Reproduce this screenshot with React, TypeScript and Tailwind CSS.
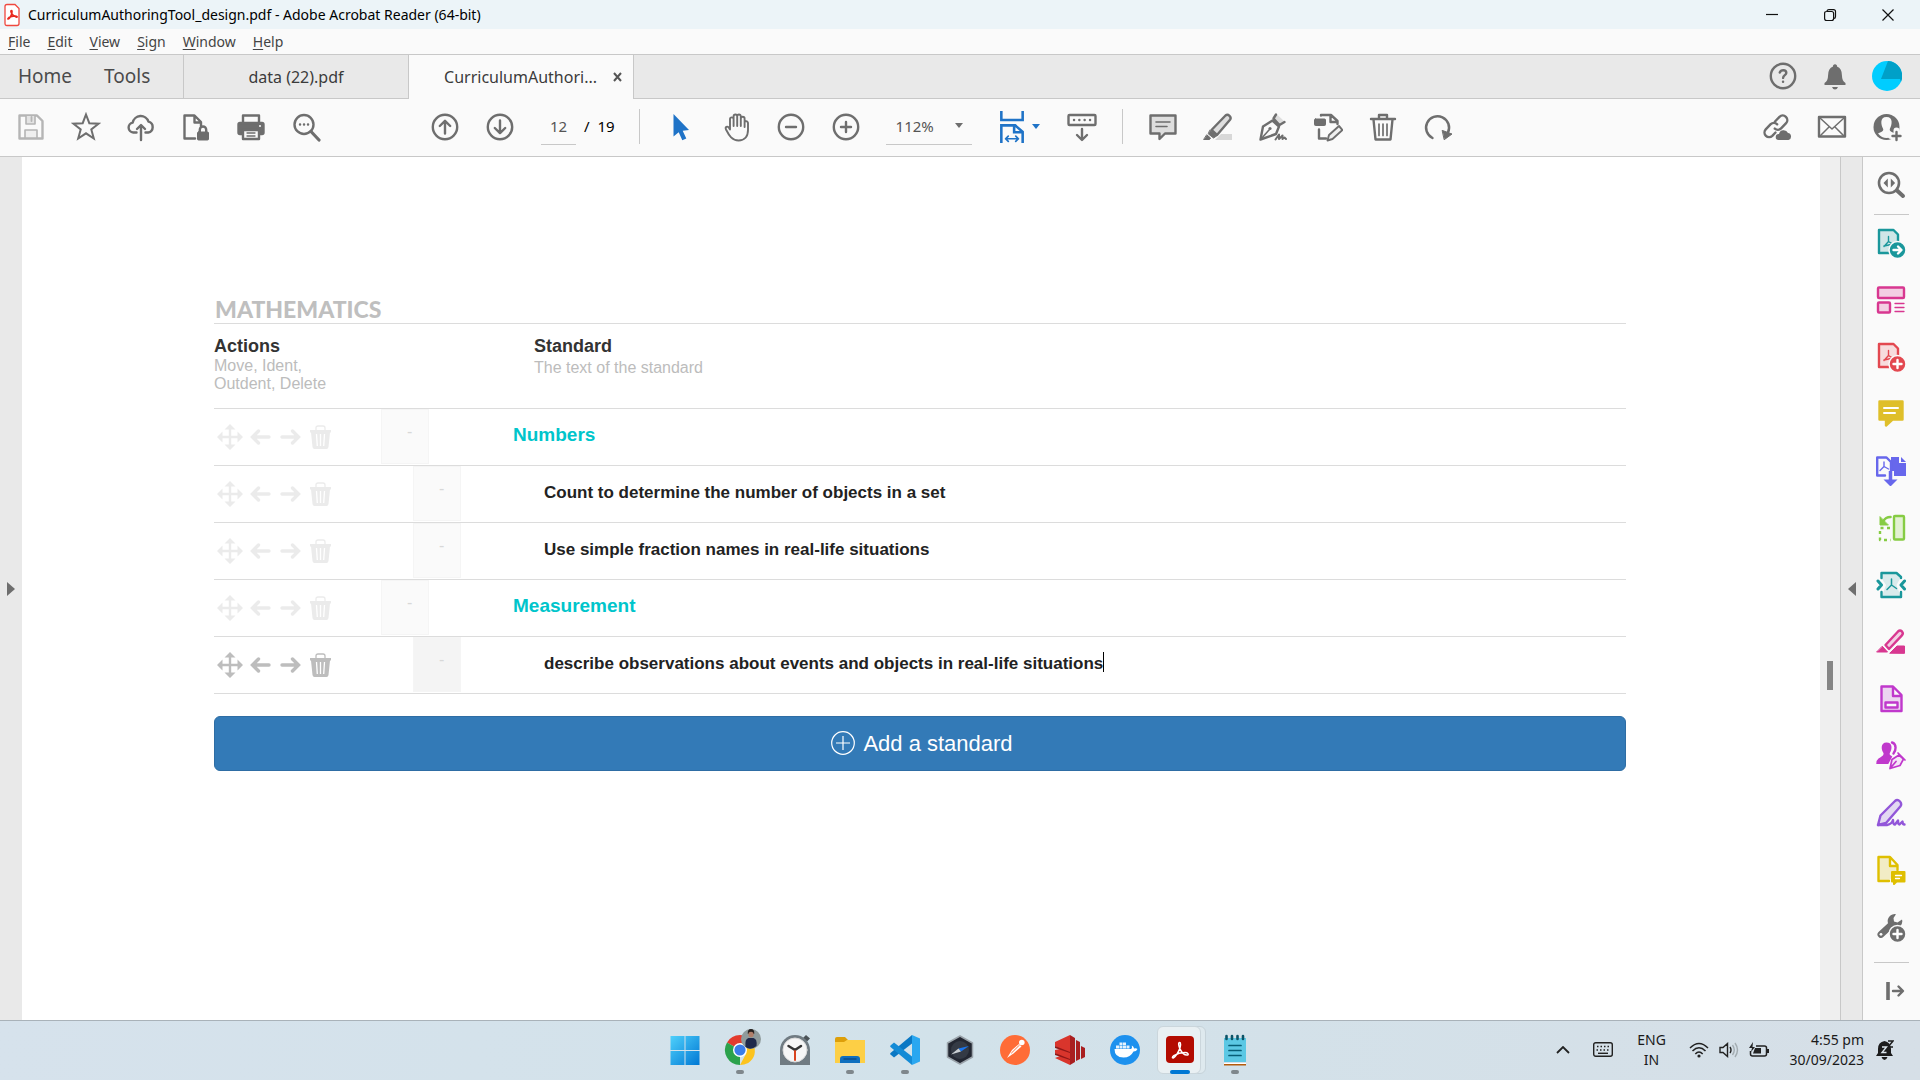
import type { ReactNode } from 'react';
import clsx from 'clsx';

type IconProps = { children: ReactNode; size?: number; className?: string };

function Icon({ children, size = 30, className }: IconProps) {
  return (
    <svg
      width={size}
      height={size}
      viewBox="0 0 30 30"
      fill="none"
      stroke="currentColor"
      strokeWidth="2.4"
      strokeLinecap="round"
      strokeLinejoin="round"
      aria-hidden="true"
      className={clsx('shrink-0', className)}
    >
      {children}
    </svg>
  );
}

function Tool({ label, children, className }: { label: string; children: ReactNode; className?: string }) {
  return (
    <button type="button" aria-label={label} className={clsx('flex h-14 w-[55px] shrink-0 items-center justify-center', className)}>
      <Icon>{children}</Icon>
    </button>
  );
}

const acrobatMark = (
  <path
    d="M14.6 7.500c-1.600 0-.9 3.800.5 6.600 1.700 3.500 4.700 6.200 7.300 5.900 1.700-.4.600-2.400-2.400-2.400-3.900 0-8.500 1.400-11.200 3-1.900 1.200-1.700 2.900-.2 2.200 2-.9 5.200-6 6.400-10 .7-2.500.9-5.300-.4-5.300z"
    strokeWidth="1.500"
  />
);

const smallMark = <path d="M12.500 8.500v5M12.500 13.500l-4.500 5M12.500 13.500l5 3.200M8 18l9.500-2" strokeWidth="1.400" />;

const fileTools = [
  {
    label: 'Save',
    className: 'text-[#b5b5b5]',
    icon: (
      <>
        <path d="M3.500 3.500H21l5.500 5.500v17.500h-23z" />
        <path d="M10 4v8h9V4" fill="#e4e4e4" strokeWidth="1.600" />
        <path d="M15.500 5v4" strokeWidth="1.800" />
        <path d="M9 26v-8h12v8z" fill="#efefef" strokeWidth="1.600" />
      </>
    ),
  },
  {
    label: 'Add to favourites',
    icon: <path d="M15 2.500l3.300 8.700 9.200.5-7.200 5.700 2.500 9.100-7.800-5.200-7.800 5.200 2.500-9.100-7.200-5.700 9.200-.5z" strokeLinejoin="miter" strokeWidth="2" />,
  },
  {
    label: 'Upload to cloud',
    icon: (
      <>
        <path d="M10.500 20.500H7.200a5 5 0 01-.5-9.900 8.200 8.200 0 0115.800-1 5.600 5.600 0 01-.3 10.900H19.500" />
        <path d="M15 28V13.500M11 17l4-4 4 4" />
      </>
    ),
  },
  {
    label: 'Protect document',
    icon: (
      <>
        <path d="M14 26.500H3.500v-23h10l6.500 6.500v4M13.500 4v6.500H19" />
        <rect x="16.500" y="20" width="11" height="8" rx="1" fill="currentColor" strokeWidth="1" />
        <path d="M18.800 20v-2.300a3.200 3.200 0 016.400 0V20" />
      </>
    ),
  },
  {
    label: 'Print',
    icon: (
      <>
        <path d="M7 10V3.500h16V10" />
        <rect x="2.500" y="11" width="25" height="11" rx="1.500" fill="currentColor" />
        <rect x="7" y="18" width="16" height="9" fill="#fafafa" />
        <path d="M11 21h8M11 24h8" strokeWidth="1.300" />
        <circle cx="24" cy="14" r="1" fill="#fafafa" stroke="none" />
      </>
    ),
  },
  {
    label: 'Find text',
    icon: (
      <>
        <circle cx="13" cy="12.500" r="9.500" />
        <path d="M20 19.500l8 8.500" strokeWidth="3.200" />
        <path d="M9 12.500h.1M13 12.500h.1M17 12.500h.1" strokeWidth="2.400" />
      </>
    ),
  },
];

const pageTools = [
  {
    label: 'Previous page',
    icon: (
      <>
        <circle cx="15" cy="15" r="12.200" />
        <path d="M15 21.500V9M9.800 14L15 8.800l5.200 5.200" />
      </>
    ),
  },
  {
    label: 'Next page',
    icon: (
      <>
        <circle cx="15" cy="15" r="12.200" />
        <path d="M15 8.500V21M9.800 16l5.200 5.200 5.200-5.200" />
      </>
    ),
  },
];

const viewTools = [
  {
    label: 'Select',
    icon: <path d="M7.500 2v22.500l5.200-4.300 3.600 8 4-1.700-3.600-7.800 6.300-.6z" fill="#1f73c7" stroke="none" />,
  },
  {
    label: 'Pan',
    icon: (
      <path
        d="M9 17.500V7.200a1.800 1.800 0 013.600 0V14M12.600 14V4.300a1.800 1.800 0 013.600 0V14M16.200 14V4.300a1.800 1.800 0 013.600 0V14M19.800 14V6.700a1.900 1.900 0 013.800 0V15M23.600 9.500q3-1 3.400 1.500v7c0 6.500-3.400 10.500-9.400 10.500-6.400 0-9.400-4.700-12.600-11-1.200-2.600 1.300-3.600 2.600-2.200L9 17.500"
        strokeWidth="1.900"
      />
    ),
  },
  {
    label: 'Zoom out',
    icon: (
      <>
        <circle cx="15" cy="15" r="12.200" />
        <path d="M10 15h10" />
      </>
    ),
  },
  {
    label: 'Zoom in',
    icon: (
      <>
        <circle cx="15" cy="15" r="12.200" />
        <path d="M10 15h10M15 10v10" />
      </>
    ),
  },
];

const markupTools = [
  {
    label: 'Add comment',
    icon: (
      <>
        <path d="M2.500 3.500h25v18H17l-5.500 5.500v-5.500h-9z" fill="#dedede" />
        <path d="M8 10h14M8 14.500h11" strokeWidth="1.600" />
      </>
    ),
  },
  {
    label: 'Highlight text',
    icon: (
      <>
        <path d="M12 28l6-6h11v6z" fill="#d8d8d8" stroke="none" />
        <path d="M8.500 18L22.500 3.500q2-1.500 4 .3 2 2 .5 4L14 23z" fill="#dedede" />
        <path d="M7 18.500l6.500 5.500-3 2-5-4zM4 23l3.500 3-1 1.500H1z" fill="currentColor" strokeWidth="1" />
      </>
    ),
  },
  {
    label: 'Sign document',
    icon: (
      <>
        <path d="M18.500 2l8 7.500-5 3.500-6-6.500z" fill="#dedede" stroke="none" />
        <path d="M18 2.500l-2.500 4 6 6.500 5-3" />
        <path d="M2.500 27.500L5 14.500l9.500-6 6.500 6-3 7.500z" />
        <path d="M3 27l8-9" strokeWidth="1.600" />
        <circle cx="12" cy="16.500" r="1.600" fill="currentColor" stroke="none" />
        <path d="M17.500 27.500l3.500-5v4.500l3.500-3.500v3.500l2-1.500 1.500 1.500" strokeWidth="2" />
      </>
    ),
  },
  {
    label: 'Edit document',
    icon: (
      <>
        <path d="M8 3.500V3h10l6.500 6v3M17.500 3.500V10H24" />
        <rect x="1.500" y="7" width="11" height="6.500" rx="1" fill="currentColor" strokeWidth="1" />
        <path d="M6 17.500v9h7" />
        <path d="M14.500 28.500l1.500-5.500 10-9 3.500 4-10 9z" fill="#efefef" strokeWidth="1.900" />
      </>
    ),
  },
  {
    label: 'Delete pages',
    icon: (
      <>
        <path d="M3 7h24M11 6.500V3h8v3.500M5.500 7.500l2 20h15l2-20" />
        <path d="M11 12v11.500M15 12v11.500M19 12v11.500" strokeWidth="1.700" />
      </>
    ),
  },
  {
    label: 'Rotate page',
    icon: (
      <>
        <path d="M9.500 26a11.500 11.500 0 1115.500-5.500" strokeWidth="2.500" />
        <path d="M19.500 18.500l9.500 3.500-7.500 5.500z" fill="currentColor" strokeWidth="1" />
      </>
    ),
  },
];

const shareTools = [
  {
    label: 'Share link',
    icon: (
      <>
        <path d="M13 9.500l4.500-4.700a4.600 4.600 0 016.600 6.400l-5 5.200a4.600 4.600 0 01-6.300.2" />
        <path d="M13.500 20.500l-3.200 3.300a4.600 4.600 0 01-6.600-6.400l5-5.200a4.600 4.600 0 016.500.1" />
        <path d="M16.500 28a3 3 0 01.5-6 4.800 4.800 0 019-1 3.600 3.600 0 01.5 7z" fill="currentColor" stroke="none" />
      </>
    ),
  },
  {
    label: 'Send by email',
    icon: (
      <>
        <rect x="2" y="5" width="26" height="19.500" />
        <path d="M3 6l12 11L27 6M3 24l9-9M27 24l-9-9" strokeWidth="1.500" />
      </>
    ),
  },
  {
    label: 'Share with people',
    icon: (
      <>
        <circle cx="14.500" cy="15" r="13" fill="currentColor" stroke="none" />
        <path d="M14.500 5c-7 0-5.500 8-3.300 12 .3 2-.7 2.500-5.200 4.500 5 6 12 6 17 0-4.500-2-5.500-2.500-5.200-4.500 2.200-4 3.700-12-3.300-12z" fill="#fafafa" stroke="none" />
        <path d="M19 24h11M24.500 18.500v11" stroke="#fafafa" strokeWidth="6" />
        <path d="M20.500 24h8M24.500 20v8" />
      </>
    ),
  },
];

const sideTools = [
  {
    label: 'Export PDF',
    color: 'text-[#1a979b]',
    icon: (
      <>
        <path d="M13 25H3V2h14.500L22 6.500V14" fill="#cfe6e7" />
        {smallMark}
        <circle cx="21.500" cy="22" r="8.500" fill="currentColor" stroke="#fafafa" strokeWidth="1.500" />
        <path d="M17.500 22h7M22 18.500l3.500 3.500-3.500 3.500" stroke="#fff" />
      </>
    ),
  },
  {
    label: 'Organise pages',
    color: 'text-[#d83790]',
    icon: (
      <>
        <rect x="2" y="2.500" width="26" height="10.500" rx="1" fill="#f3cfe3" />
        <rect x="2" y="17.500" width="12" height="10" rx="1" fill="#f3cfe3" />
        <path d="M19 18.500h9M19 22.500h9M19 26.500h9" strokeWidth="1.300" />
      </>
    ),
  },
  {
    label: 'Create PDF',
    color: 'text-[#e34850]',
    icon: (
      <>
        <path d="M13 25H3V2h14.500L22 6.500V14" fill="#f7dcdd" />
        {smallMark}
        <circle cx="21.500" cy="22" r="8.500" fill="currentColor" stroke="#fafafa" strokeWidth="1.500" />
        <path d="M17.500 22h8M21.500 18v8" stroke="#fff" />
      </>
    ),
  },
  {
    label: 'Comment',
    color: 'text-[#dfbf2a]',
    icon: (
      <>
        <path d="M3.500 2.500h23v18h-10l-6.500 6v-6H3.500z" fill="currentColor" />
        <path d="M8 9h14M8 14h11" stroke="#fff" strokeWidth="2" />
      </>
    ),
  },
  {
    label: 'Combine files',
    color: 'text-[#6767ec]',
    icon: (
      <>
        <path d="M15 1h8v6h7v13H15z" fill="currentColor" stroke="none" />
        <path d="M25 1l5 5h-5z" fill="currentColor" stroke="none" />
        <path d="M9 19.500H1.200V1.500h9.300L15 6v10" fill="#fafafa" />
        <path d="M8 6v4.500L4 14.500M8 10.500l4.500 2.500" strokeWidth="1.400" />
        <path d="M14.500 15v8" stroke="#fafafa" strokeWidth="7" strokeLinecap="butt" />
        <path d="M14.500 15v10" strokeWidth="3.500" strokeLinecap="butt" />
        <path d="M7.500 23.500h14l-7 7z" fill="currentColor" stroke="none" />
      </>
    ),
  },
  {
    label: 'Compare pages',
    color: 'text-[#86cc43]',
    icon: (
      <>
        <rect x="18" y="3" width="10" height="23.500" rx="1" fill="#e3f1d3" />
        <path d="M14 15H4v12h11" strokeDasharray="3 3.500" strokeLinecap="butt" />
        <path d="M14.500 4q-5 0-7 4" strokeWidth="2.600" />
        <path d="M4 4v8h8z" fill="currentColor" strokeWidth="1" />
      </>
    ),
  },
  {
    label: 'Compress PDF',
    color: 'text-[#1a979b]',
    icon: (
      <>
        <path d="M6 4h14l4.500 4-4 7 4 11H6l4-11-4-6z" fill="#d9ebec" stroke="none" />
        <path d="M5.500 8V3h15L25 7v1M5.500 22v5H25v-5" />
        <path d="M15.500 9v6l-4.500 4.500M15.500 15l5 3.500" strokeWidth="1.500" />
        <path d="M2 11l3.500 4L2 19M28.500 11L25 15l3.500 4" strokeWidth="3" />
      </>
    ),
  },
  {
    label: 'Redact',
    color: 'text-[#d83790]',
    icon: (
      <>
        <path d="M9.500 18L22 4.500q2-1.800 4 0 1.800 2-.3 4.200L13 22z" fill="#f3cfe3" />
        <path d="M6.500 19.500l5 5.500H1zM14 26l7-7h7.500v7z" fill="currentColor" strokeWidth="1" />
      </>
    ),
  },
  {
    label: 'Prepare form',
    color: 'text-[#c038cc]',
    icon: (
      <>
        <path d="M5.500 2.500H17l8.500 8.500v16h-20zM17 3v9h8" fill="#ecd5f1" />
        <rect x="9.500" y="18.500" width="12" height="5" fill="#fafafa" />
      </>
    ),
  },
  {
    label: 'Request signatures',
    color: 'text-[#c038cc]',
    icon: (
      <>
        <path d="M10.500 1.500c-6 0-5.500 7-3 10.500.3 2.500-1 3-5 5.500Q.3 19 .3 23h12l4-7.500c-2.500-1.500-3-2-2.500-3.500 2.500-4 3-10.500-3.300-10.500z" fill="currentColor" stroke="none" />
        <path d="M16 1.500c5 1.500 4 8 1.500 11" />
        <path d="M14 27.500l2-9 7-4.500 4.500 4-3.500 6.500zM14 27.500l6-7M22 12l7 7" fill="#f5e6f8" strokeWidth="1.700" />
      </>
    ),
  },
  {
    label: 'Fill and sign',
    color: 'text-[#9256d9]',
    icon: (
      <>
        <path d="M2 27l2.500-9.500L19 3q2.500-2 5 .5 2.200 2.500.3 5L10 25z" fill="#e3d8f2" />
        <path d="M2 27h9q5-1 6-5 0 5 2 4.500l3-4q0 4 1.500 4l3-3q0 3 2 3" />
      </>
    ),
  },
  {
    label: 'Send for comments',
    color: 'text-[#dfbf00]',
    icon: (
      <>
        <path d="M13 26H2.500V2H14l7.500 8v5M14 2.500V11h7.500" fill="#f2ecc5" />
        <path d="M16 17h12.500v9.500h-8L18 29v-2.500h-2z" fill="currentColor" strokeWidth="2" />
        <path d="M19.500 20.500h6M19.500 23.500h4" stroke="#fff" strokeWidth="1.300" />
      </>
    ),
  },
  {
    label: 'More tools',
    color: 'text-[#6e6e6e]',
    icon: (
      <>
        <path d="M20 2.200a7 7 0 00-8 9L2.500 20a3.400 3.400 0 005 4.800L17 16a7 7 0 009-8.500l-4.500 3-3.500-1-.5-3.500z" fill="currentColor" stroke="none" />
        <circle cx="5" cy="22.300" r="1.400" fill="#fafafa" stroke="none" />
        <circle cx="21.500" cy="22" r="8.500" fill="currentColor" stroke="#fafafa" strokeWidth="1.500" />
        <path d="M17.500 22h8M21.500 18v8" stroke="#fff" />
      </>
    ),
  },
];

const rows = [
  { text: 'Numbers', level: 1 },
  { text: 'Count to determine the number of objects in a set', level: 2 },
  { text: 'Use simple fraction names in real-life situations', level: 2 },
  { text: 'Measurement', level: 1 },
  { text: 'describe observations about events and objects in real-life situations', level: 2, editing: true },
];

function TitleBar() {
  return (
    <header className="flex h-[29px] items-center bg-[#ecf4f8] pl-1">
      <svg width="16" height="24" viewBox="0 0 16 24" aria-hidden="true">
        <path d="M1 3.500q0-2 2-2h8l4 4v15q0 2-2 2H3q-2 0-2-2z" fill="#fff" stroke="#f0483e" strokeWidth="1.300" />
        <path d="M7.500 7.500c-1.800 0 .2 5 4.600 6.600 2 .4 1-1.300-1.600-1-3 .3-5.300 1-6.500 2.300-.7 1 .8 1 1.900-.7 1.600-2.500 3-7.200 1.600-7.200z" fill="none" stroke="#e8281e" strokeWidth="1.500" />
      </svg>
      <h1 className="ml-2 flex-1 text-[14px] text-black">CurriculumAuthoringTool_design.pdf - Adobe Acrobat Reader (64-bit)</h1>
      <div className="flex pr-[3px]">
        {[
          { label: 'Minimise', d: 'M0 5.500h12' },
          { label: 'Restore', d: 'M.6 4.500q0-2 2-2h5q2 0 2 2v5q0 2-2 2h-5q-2 0-2-2zM3 2.500Q3 .6 5 .6h4.500q2 0 2 2V7.500q0 2-1.500 2' },
          { label: 'Close', d: 'M.5.5l11 11M11.500.5l-11 11' },
        ].map((b) => (
          <button key={b.label} type="button" aria-label={b.label} className="flex h-7 w-[58px] items-center justify-center">
            <svg width="12" height="12" viewBox="0 0 12 12" fill="none" stroke="#111" strokeWidth="1.200" aria-hidden="true" className="overflow-visible">
              <path d={b.d} />
            </svg>
          </button>
        ))}
      </div>
    </header>
  );
}

function MenuBar() {
  return (
    <nav className="flex h-[25px] items-center gap-[17px] bg-[#fafafa] px-2 text-[14px] text-[#444]">
      {['File', 'Edit', 'View', 'Sign', 'Window', 'Help'].map((m) => (
        <button key={m} type="button">
          <span className="underline underline-offset-2">{m[0]}</span>
          {m.slice(1)}
        </button>
      ))}
    </nav>
  );
}

function TabBar() {
  return (
    <div className="flex h-[45px] border-t border-[#c8c8c8] bg-[#e9e9e9] text-[#4b4b4b]">
      <div className="flex w-[183px] items-center gap-8 border-b border-[#c8c8c8] pl-[18px] text-[19px]">
        <button type="button">Home</button>
        <button type="button">Tools</button>
      </div>
      <button type="button" className="w-[225px] border-b border-l border-[#c8c8c8] text-[16px] text-[#3b3b3b]">
        data (22).pdf
      </button>
      <div className="flex w-[226px] items-center justify-end border-x border-[#c8c8c8] bg-[#fafafa] pr-[11px] text-[16px] text-[#3b3b3b]">
        <button type="button">CurriculumAuthori...</button>
        <button type="button" aria-label="Close tab" className="ml-4">
          <svg width="9" height="10" viewBox="0 0 9 10" stroke="#555" strokeWidth="2" aria-hidden="true">
            <path d="M1 1l7 8M8 1L1 9" />
          </svg>
        </button>
      </div>
      <div className="flex flex-1 items-center justify-end border-b border-[#c8c8c8] pb-[2px] pr-[7px] text-[#6e6e6e]">
        <button type="button" aria-label="Help" className="flex w-[52px] justify-center">
          <Icon>
            <circle cx="15" cy="15" r="12.200" />
            <path d="M11.800 11.500q.8-2.200 3.500-2.200 3 0 3 2.600c0 2.200-3.200 2.400-3.200 5M15 20.800h.1" />
          </Icon>
        </button>
        <button type="button" aria-label="Notifications" className="flex w-[52px] justify-center">
          <Icon>
            <path d="M4.500 24v-2q3.500-2 3.500-7 0-8 5-9.500V4.500q2-2.500 4 0v1q5 1.500 5 9.500 0 5 3.500 7v2zM12 26h6q-1 2.500-3 2.500t-3-2.500z" fill="currentColor" stroke="none" />
          </Icon>
        </button>
        <button type="button" aria-label="Account" className="flex w-[52px] justify-center">
          <Icon>
            <circle cx="15" cy="15" r="15" fill="#00cdff" stroke="none" />
            <path d="M16 0a15 15 0 0113 21l-1-3H9z" fill="#00a0c8" stroke="none" />
          </Icon>
        </button>
      </div>
    </div>
  );
}

function Toolbar() {
  return (
    <div className="flex h-[58px] items-center border-b border-[#c8c8c8] bg-[#fafafa] pb-[2px] pl-[3px] pr-[6px] text-[15px] text-[#6e6e6e]">
      {fileTools.map((t) => (
        <Tool key={t.label} label={t.label} className={t.className}>
          {t.icon}
        </Tool>
      ))}
      <div className="ml-[84px] flex">
        {pageTools.map((t) => (
          <Tool key={t.label} label={t.label}>
            {t.icon}
          </Tool>
        ))}
      </div>
      <input aria-label="Page number" defaultValue="12" className="ml-[14px] h-9 w-[35px] border-b border-[#c8c8c8] bg-transparent text-center text-[#555]" />
      <span className="ml-2 text-black">/&nbsp; 19</span>
      <div className="ml-6 mr-[14px] h-[35px] w-px bg-[#c8c8c8]" />
      {viewTools.map((t) => (
        <Tool key={t.label} label={t.label}>
          {t.icon}
        </Tool>
      ))}
      <div className="ml-3 flex items-center border-b border-[#c8c8c8]">
        <select aria-label="Zoom level" defaultValue="112" className="h-9 w-[69px] appearance-none bg-transparent pl-[10px] text-[#555]">
          <option value="112">112%</option>
        </select>
        <svg width="17" height="6" viewBox="0 0 17 6" aria-hidden="true">
          <path d="M0 0h8L4 5z" fill="#6e6e6e" />
        </svg>
      </div>
      <button type="button" aria-label="Fit width" className="ml-6 flex w-[71px] items-center text-[#1f73c7]">
        <Icon size={32}>
          <path d="M5 0v8.500h20V0M5 30V13.500h13l7 6V30M17 14v6h7" strokeLinecap="butt" strokeLinejoin="miter" />
          <path d="M9 26h12M11.500 23.500L9 26l2.500 2.500M18.500 23.500L21 26l-2.500 2.500" strokeWidth="1.600" />
        </Icon>
        <svg width="10" height="6" viewBox="0 0 10 6" aria-hidden="true" className="ml-1">
          <path d="M0 0h8L4 5z" fill="#1f73c7" />
        </svg>
      </button>
      <Tool label="Show keyboard tools" className="-ml-3">
        <rect x="1.500" y="3" width="27" height="10" rx="1" />
        <path d="M7 8h.1M12.300 8h.1M17.600 8h.1M23 8h.1" strokeWidth="2.400" />
        <path d="M15 17v10.500M10 23l5 5 5-5" />
      </Tool>
      <div className="ml-3 mr-[13px] h-[35px] w-px bg-[#c8c8c8]" />
      {markupTools.map((t) => (
        <Tool key={t.label} label={t.label}>
          {t.icon}
        </Tool>
      ))}
      <div className="ml-auto flex">
        {shareTools.map((t) => (
          <Tool key={t.label} label={t.label}>
            {t.icon}
          </Tool>
        ))}
      </div>
    </div>
  );
}

function RowActions({ active }: { active?: boolean }) {
  return (
    <div className={clsx('flex items-center pl-[3px]', active ? 'text-[#bdbdbd]' : 'text-[#ebebeb]')}>
      <button type="button" aria-label="Move">
        <svg width="26" height="26" viewBox="0 0 26 26" fill="currentColor" aria-hidden="true">
          <path d="M13 0l5.500 5.500h-4.300v6.300h6.300V7.500L26 13l-5.500 5.500v-4.300h-6.300v6.300h4.300L13 26l-5.500-5.500h4.300v-6.300H5.500v4.300L0 13l5.500-5.500v4.300h6.300V5.500H7.500z" />
        </svg>
      </button>
      <button type="button" aria-label="Outdent" className="ml-[7px]">
        <svg width="21" height="16" viewBox="0 0 21 16" fill="none" stroke="currentColor" strokeWidth="3.400" strokeLinecap="round" aria-hidden="true">
          <path d="M19 8H3M8.500 2L2.500 8l6 6" />
        </svg>
      </button>
      <button type="button" aria-label="Indent" className="ml-[9px]">
        <svg width="21" height="16" viewBox="0 0 21 16" fill="none" stroke="currentColor" strokeWidth="3.400" strokeLinecap="round" aria-hidden="true">
          <path d="M2 8h16M12.500 2l6 6-6 6" />
        </svg>
      </button>
      <button type="button" aria-label="Delete" className="ml-[9px]">
        <svg width="21" height="24" viewBox="0 0 21 24" aria-hidden="true">
          <path d="M6 5V3q0-2 2-2h5q2 0 2 2v2" fill="none" stroke="currentColor" strokeWidth="1.300" />
          <path d="M0 5h21v2.500h-1L18.500 22q-.3 2-2 2h-12q-1.700 0-2-2L1 7.500H0z" fill="currentColor" />
          <path d="M6.500 9l.8 12M10.500 9v12M14.500 9l-.8 12" stroke="#fff" strokeWidth="1.300" />
        </svg>
      </button>
    </div>
  );
}

function Standards() {
  return (
    <main className="flex-1 bg-white pl-48 pr-[194px] pt-[138px] font-['Liberation_Sans',sans-serif]">
      <h2 className="border-b border-[#dcdcdc] pl-px font-[Lato,sans-serif] text-[23px] font-black leading-[28px] text-[#bfbfbf]">MATHEMATICS</h2>
      <table className="w-full table-fixed border-collapse text-left">
        <thead>
          <tr className="h-[84px] border-b border-[#dcdcdc] align-top">
            <th className="w-[167px] pt-[11px] font-normal">
              <div className="text-[18px] font-bold leading-[22px] text-[#333]">Actions</div>
              <div className="text-[16px] leading-[18px] text-[#bcbcbc]">
                Move, Ident,
                <br />
                Outdent, Delete
              </div>
            </th>
            <td className="w-[132px]" />
            <th className="pl-[21px] pt-[11px] font-normal">
              <div className="text-[18px] font-bold leading-[22px] text-[#333]">Standard</div>
              <div className="text-[16px] leading-[22px] text-[#bcbcbc]">The text of the standard</div>
            </th>
          </tr>
        </thead>
        <tbody>
          {rows.map((r) => (
            <tr key={r.text} className="h-[57px] border-b border-[#dcdcdc]">
              <td>
                <RowActions active={r.editing} />
              </td>
              <td className={r.level === 2 ? 'pl-8' : ''}>
                <div
                  className={clsx(
                    'h-[55px] w-12 border border-[#f5f5f5] pl-[25px] pt-[10px] text-[16px] leading-6 text-[#d8d8d8]',
                    r.editing ? 'bg-[#f4f4f4]' : 'bg-[#fafafa]',
                  )}
                >
                  -
                </div>
              </td>
              {r.level === 1 ? (
                <td className="pb-[2px] text-[19px] font-bold text-[#00c5cb]">{r.text}</td>
              ) : (
                <td className="pb-[2px] pl-[31px] text-[17px] font-bold text-[#222]">
                  {r.editing ? (
                    <div className="flex items-center">
                      <input aria-label="Standard text" defaultValue={r.text} className="field-sizing-content outline-none" />
                      <span className="-mt-1 h-5 w-px bg-black" />
                    </div>
                  ) : (
                    r.text
                  )}
                </td>
              )}
            </tr>
          ))}
        </tbody>
      </table>
      <button type="button" className="mt-[22px] flex h-[55px] w-full items-center justify-center gap-2 rounded-md border border-[#2e6da4] bg-[#337ab7] pl-1 text-[22px] text-white">
        <svg width="24" height="24" viewBox="0 0 24 24" fill="none" stroke="#fff" strokeWidth="1.200" aria-hidden="true">
          <circle cx="12" cy="12" r="11.300" />
          <path d="M5 12h14M12 5v14" />
        </svg>
        Add a standard
      </button>
    </main>
  );
}

function SidePanel() {
  return (
    <aside className="flex w-[58px] flex-col items-center border-l border-[#c8c8c8] bg-[#fafafa]">
      <button type="button" aria-label="Search tools" className="flex h-[57px] items-center pb-[2px] pr-[2px] text-[#6e6e6e]">
        <Icon>
          <circle cx="13" cy="13" r="10" strokeWidth="2.600" />
          <path d="M21 20.500l6 5.500" strokeWidth="4" />
          <path d="M11.800 8.500v9L7.500 13zM14.800 8.500v9l4.300-4.500z" fill="currentColor" stroke="none" />
        </Icon>
      </button>
      <div className="h-px w-[35px] bg-[#c8c8c8]" />
      {sideTools.map((t) => (
        <button key={t.label} type="button" aria-label={t.label} className={clsx('flex h-[57px] items-center pb-[2px] pr-[2px]', t.color)}>
          <Icon>{t.icon}</Icon>
        </button>
      ))}
      <div className="mt-auto h-px w-[35px] bg-[#c8c8c8]" />
      <button type="button" aria-label="Collapse panel" className="flex h-[57px] items-center pb-[2px] pl-2 text-[#6e6e6e]">
        <Icon>
          <path d="M7 6v18" strokeWidth="3.600" strokeLinecap="butt" />
          <path d="M12 15h9M17.500 10.500L22 15l-4.500 4.500" strokeWidth="2.400" />
        </Icon>
      </button>
    </aside>
  );
}

const taskbar = [
  {
    label: 'Start',
    icon: (
      <>
        <defs>
          <linearGradient id="win" x1="0" y1="0" x2="1" y2="1" gradientUnits="objectBoundingBox">
            <stop offset="0" stopColor="#4fd0fb" />
            <stop offset="1" stopColor="#0078d4" />
          </linearGradient>
        </defs>
        <path d="M.5 1h14v14H.5zM15.500 1h14v14h-14zM.5 16h14v14H.5zM15.500 16h14v14h-14z" fill="url(#win)" stroke="none" />
      </>
    ),
  },
  {
    label: 'Chrome',
    mark: 'bg-[#7f878c]',
    icon: (
      <g stroke="none">
        <path d="M15 15L2 7.500A15 15 0 0128 7.500z" fill="#e33b2e" />
        <path d="M15 15v15A15 15 0 012 7.500z" fill="#2ba24c" />
        <path d="M15 8h13.200q5 13-5 20-4 2-8.200 2l6.200-11.500z" fill="#fcc31e" />
        <circle cx="15" cy="15" r="7" fill="#fff" />
        <circle cx="15" cy="15" r="5.600" fill="#3b7de9" />
        <circle cx="26" cy="4" r="10" fill="#8f9b9c" />
        <path d="M20.500 12q-1-8 3-9h5q4 1 3 8-6 5-11 1z" fill="#20294a" />
        <path d="M22.800-1q-.5-5 3.200-5t3.200 5z" fill="#26211f" />
        <circle cx="26" cy="-.5" r="2.700" fill="#b07f6a" />
      </g>
    ),
  },
  {
    label: 'Clock',
    icon: (
      <>
        <path d="M23 3l3-3 4 3.500-3 3z" fill="#4b5358" stroke="none" />
        <path d="M0 30V15a15 15 0 0130 0v15z" fill="#707b82" stroke="none" />
        <circle cx="15" cy="15" r="12" fill="#f6f6f6" stroke="#dadada" strokeWidth="1" />
        <path d="M8.500 11l6.500 4 6-4" stroke="#333" strokeWidth="2.500" />
        <path d="M15 16v9" stroke="#d9431e" strokeWidth="2" />
      </>
    ),
  },
  {
    label: 'File Explorer',
    mark: 'bg-[#7f878c]',
    icon: (
      <g stroke="none">
        <path d="M0 4q0-2 2-2h8l3 3v7H0z" fill="#dd9f0a" />
        <path d="M0 7h9l3-2h18v23H0z" fill="#fdcf45" />
        <path d="M5 28v-4q0-3 3-3h14q3 0 3 3v4z" fill="#0f6fbf" />
        <path d="M9 24h12" stroke="#0a4d8c" strokeWidth="1.300" />
      </g>
    ),
  },
  {
    label: 'Visual Studio Code',
    mark: 'bg-[#7f878c]',
    icon: (
      <g stroke="none">
        <path d="M22 0l8 3.500v23L22 30z" fill="#2aa7f0" />
        <path d="M22 0v8.500L4 22.500l-3.500-3q-.8-.8 0-1.600z" fill="#0a78c4" />
        <path d="M22 30v-8.500L4 7.500l-3.500 3q-.8.8 0 1.600z" fill="#138bd6" />
      </g>
    ),
  },
  {
    label: 'Compass',
    icon: (
      <>
        <path d="M15 1l12.500 7v14L15 29 2.500 22V8z" fill="#232732" stroke="#9aa3aa" strokeWidth="1.500" />
        <circle cx="15" cy="15" r="9" fill="#343a45" stroke="none" />
        <path d="M24 11L13.500 13.500l2.500 3z" fill="#1976f0" stroke="none" />
        <path d="M6 19.500l10-3-2.500-3z" fill="#c9ced3" stroke="none" />
      </>
    ),
  },
  {
    label: 'Postman',
    icon: (
      <>
        <circle cx="15" cy="15" r="15" fill="#ff6c37" stroke="none" />
        <path d="M19 9l2.500 2.500-8 7L7 23l5-8z" fill="#fff" stroke="none" />
        <circle cx="21.800" cy="7.500" r="2.800" fill="#fff" stroke="none" />
        <path d="M19 10.500l-7.500 7.500" stroke="#ff6c37" strokeWidth="1" />
      </>
    ),
  },
  {
    label: 'Redis',
    icon: (
      <g stroke="none">
        <path d="M0 7l15-7v30L0 23l5-2-5-3v-3l5-1-5-3z" fill="#d9352c" />
        <path d="M0 11l15 6v1L0 13zM0 18l15 6v1L0 20z" fill="#8f1717" />
        <path d="M15 0l5 3v24l-5 3zM21 5l4 2v17l-4 2zM26 11l4 2v9l-4 2z" fill="#a91f20" />
      </g>
    ),
  },
  {
    label: 'Docker',
    icon: (
      <g stroke="none">
        <circle cx="15" cy="15" r="15" fill="#1d91ee" />
        <path d="M4.500 14h16.500q1.500-1 .8-3.500 2 .8 2.300 3 2-.5 3.400.5-1 2.500-4 2.500-3 6-10 6-9 0-9-8.500z" fill="#fff" />
        <path d="M6 10.500h3v3H6zM9.500 10.500h3v3h-3zM13 10.500h3v3h-3zM16.500 10.500h3v3h-3zM9.500 7.500h3V10h-3zM13 7.500h3V10h-3z" fill="#e5f2fd" />
      </g>
    ),
  },
  {
    label: 'Acrobat Reader',
    active: true,
    icon: (
      <>
        <rect x="1" y="1" width="28" height="27" rx="4" fill="#b30b00" stroke="none" />
        <g stroke="#fff">{acrobatMark}</g>
      </>
    ),
  },
  {
    label: 'Notepad',
    mark: 'bg-[#7f878c]',
    icon: (
      <>
        <path d="M4 3h22v24H4z" fill="#5cc8e4" stroke="none" />
        <path d="M6.500 1v3M12 1v3M17.500 1v3M23 1v3" stroke="#0b5468" strokeWidth="2.600" />
        <path d="M9 10.500h12M9 15.500h12M9 20.500h12" stroke="#075e77" strokeWidth="1.700" />
        <path d="M4 28h22v1H4z" fill="#fff" stroke="none" />
        <path d="M4 29h22v1.500H4z" fill="#b45b0b" stroke="none" />
      </>
    ),
  },
];

function Taskbar() {
  return (
    <footer className="grid h-[60px] grid-cols-[1fr_auto_1fr] items-center border-t border-[#a9b2b9] bg-linear-to-r from-[#d6e2ec] via-[#d2e2ea] to-[#d6dfe7] font-['Noto_Sans',sans-serif] text-[#1a1a1a]">
      <div />
      <div className="flex">
        {taskbar.map((t) => (
          <button key={t.label} type="button" aria-label={t.label} className="relative flex h-[59px] w-[55px] items-center justify-center pb-[2px]">
            {t.active && (
              <>
                <span className="absolute left-2 top-[5px] h-12 w-[45px] rounded-md border border-[#c6d3da] bg-[#dee9ee]" />
                <span className="absolute left-1 top-[5px] h-12 w-11 rounded-md border border-[#cbd6dc] bg-[#e9f0f3]" />
              </>
            )}
            <Icon className="relative overflow-visible">{t.icon}</Icon>
            {t.active && <span className="absolute bottom-[6px] h-1 w-5 rounded-full bg-[#0078d4]" />}
            {t.mark && <span className={clsx('absolute bottom-[6px] h-1 w-2 rounded-full', t.mark)} />}
          </button>
        ))}
      </div>
      <div className="flex items-center justify-end pb-[2px] pr-[26px]">
        <button type="button" aria-label="Show hidden icons" className="mr-[23px]">
          <svg width="14" height="8" viewBox="0 0 14 8" fill="none" stroke="#222" strokeWidth="1.800" aria-hidden="true">
            <path d="M1 7l6-6 6 6" />
          </svg>
        </button>
        <svg width="20" height="15" viewBox="0 0 20 15" fill="none" stroke="#222" strokeWidth="1.400" aria-hidden="true" className="mr-6">
          <rect x=".7" y=".7" width="18.600" height="13.600" rx="2" />
          <path d="M4 4.500h13M3.500 8h13" strokeDasharray="1.500 2" strokeWidth="1.600" />
          <path d="M5 11.300h10" />
        </svg>
        <button type="button" className="mr-[22px] w-[30px] text-center text-[14px] leading-5">
          ENG
          <br />
          IN
        </button>
        <svg width="20" height="16" viewBox="0 0 20 16" fill="none" stroke="#222" strokeWidth="1.500" aria-hidden="true" className="mr-[10px]">
          <path d="M1 6q9-9 18 0M3.500 9q6.500-6.500 13 0M6.300 12q3.700-3.800 7.400 0" />
          <circle cx="10" cy="14" r="1.600" fill="#222" stroke="none" />
        </svg>
        <svg width="20" height="16" viewBox="0 0 20 16" fill="none" stroke="#222" strokeWidth="1.400" aria-hidden="true" className="mr-[10px]">
          <path d="M1 5.500h3L8.500 1.500v13L4 10.500H1zM11 5q2 3 0 6" />
          <path d="M13.500 3q3.500 5 0 10M16 1q5 7 0 14" stroke="#a3acb1" />
        </svg>
        <svg width="20" height="16" viewBox="0 0 20 16" fill="none" stroke="#222" strokeWidth="1.500" aria-hidden="true" className="mr-[21px]">
          <path d="M7 4h8.500q2 0 2 2v6q0 2-2 2h-12q-2 0-2-2V9" />
          <path d="M4 11.500L6 6h6v5.500zM18 7h2v4h-2zM4 0L0 6h3L2 10l4-5H3.500z" fill="#222" stroke="none" />
        </svg>
        <div className="mr-3 text-right text-[14px] leading-5">
          4:55 pm
          <br />
          30/09/2023
        </div>
        <svg width="18" height="20" viewBox="0 0 18 20" aria-hidden="true">
          <path d="M2 9q0-7 6.500-8 6 1 6.500 8v4l2 3H0l2-3zM5.500 17h6q-1 3-3 3t-3-3z" fill="#1c1c1c" />
          <path d="M12 1h5l-5 6h5" fill="none" stroke="#1c1c1c" strokeWidth="1.400" />
          <path d="M6 7h4.500L6 12.500h4.500" fill="none" stroke="#dbe4ea" strokeWidth="1.400" />
        </svg>
      </div>
    </footer>
  );
}

export default function App() {
  return (
    <div className="flex min-h-screen flex-col bg-[#fafafa] font-['Noto_Sans',sans-serif]">
      <TitleBar />
      <MenuBar />
      <TabBar />
      <Toolbar />
      <div className="flex flex-1">
        <button type="button" aria-label="Open navigation pane" className="flex w-[22px] items-center justify-center bg-[#e9e9e9]">
          <svg width="8" height="14" viewBox="0 0 8 14" fill="#6e6e6e" aria-hidden="true">
            <path d="M0 0l8 7-8 7z" />
          </svg>
        </button>
        <Standards />
        <div className="flex w-5 flex-col items-center bg-[#efefef] pt-[504px]">
          <div className="h-[29px] w-[6px] bg-[#858585]" />
        </div>
        <button type="button" aria-label="Close tools pane" className="flex w-[22px] items-center justify-center border-l border-[#c8c8c8] bg-[#e9e9e9]">
          <svg width="8" height="14" viewBox="0 0 8 14" fill="#6e6e6e" aria-hidden="true">
            <path d="M8 0L0 7l8 7z" />
          </svg>
        </button>
        <SidePanel />
      </div>
      <Taskbar />
    </div>
  );
}
